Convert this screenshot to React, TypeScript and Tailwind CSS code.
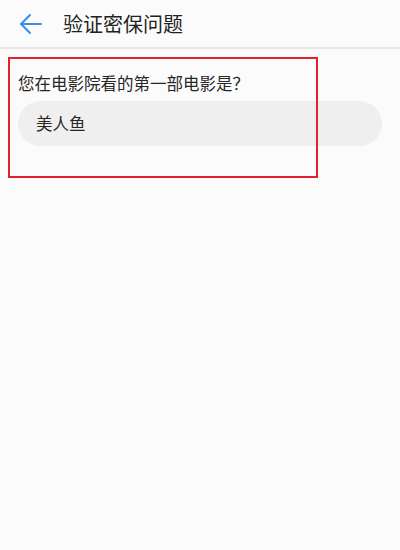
import React from 'react';

export default function App() {
  return (
    <div
      className="relative w-[400px] h-[550px] bg-[#fbfbfb] text-[#1f1f1f]"
      style={{ fontFamily: '"Noto Sans CJK SC", "Noto Sans", sans-serif' }}
    >
      {/* header */}
      <div className="flex items-center h-[49px] border-b-2 border-[#e6e6e6] pl-[19px]">
        <svg width="23" height="22" viewBox="0 0 23 22" fill="none" stroke="#3a8ee6" strokeWidth="2" strokeLinecap="round" strokeLinejoin="round">
          <path d="M22 11H2" />
          <path d="M11 2L2 11l9 9" />
        </svg>
        <span className="ml-[21px] text-[20px] leading-none text-[#222]">验证密保问题</span>
      </div>

      {/* content */}
      <div className="px-[18px] pt-[26px]">
        <p className="text-[16.5px] leading-none text-[#262626]">您在电影院看的第一部电影是？</p>
        <div className="mt-[9px] w-[364px] h-[45px] rounded-full bg-[#efefef] flex items-center pl-[18px]">
          <span className="text-[16.5px] leading-none text-[#262626]">美人鱼</span>
        </div>
      </div>

      {/* annotation box */}
      <div className="absolute left-[8px] top-[57px] w-[310px] h-[121px] border-2 border-[#e3222f]" />
    </div>
  );
}
